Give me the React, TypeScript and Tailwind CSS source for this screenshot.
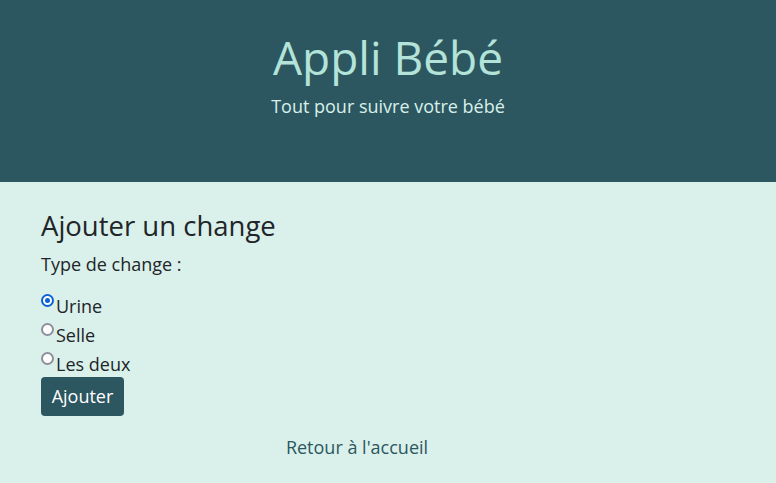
export default function App() {
  const font = { fontFamily: '"Open Sans", "Noto Sans", sans-serif' };
  return (
    <div className="w-[776px] h-[483px] bg-[#daf0ea] text-[#212529]" style={font}>
      <header className="h-[182px] bg-[#2c5760] flex flex-col items-center pt-[27px]">
        <h1 className="text-[46px] leading-[60px] text-[#b3e3d9] font-normal">Appli Bébé</h1>
        <p className="text-[18px] leading-[24px] text-[#d9f0ea] mt-[7px]">Tout pour suivre votre bébé</p>
      </header>
      <main className="pl-[41px] pt-[26px]">
        <h2 className="text-[27.5px] leading-[36px]">Ajouter un change</h2>
        <p className="text-[18px] leading-[24px] mt-[8px]">Type de change :</p>
        <div className="mt-[19px] flex flex-col">
          {["Urine", "Selle", "Les deux"].map((l, i) => (
            <label key={l} className="flex items-start h-[29px] text-[18px] leading-[29px]">
              {i === 0 ? (
                <span className="mt-[-1px] w-[13px] h-[13px] rounded-full border-[2px] border-[#0b62d8] bg-white flex items-center justify-center shrink-0">
                  <span className="w-[5px] h-[5px] rounded-full bg-[#0b62d8]" />
                </span>
              ) : (
                <span className="mt-[-1px] w-[13px] h-[13px] rounded-full border-[2px] border-[#8f8f9d] bg-white shrink-0" />
              )}
              <span className="mt-[-3px] ml-[2px]">{l}</span>
            </label>
          ))}
        </div>
        <button className="mt-[-5px] bg-[#2c5760] text-white text-[18px] rounded-[4px] w-[83px] h-[39px] flex items-center justify-center">Ajouter</button>
        <div className="w-[632px] text-center mt-[18px]">
          <a className="text-[18px] text-[#2c5760]">Retour à l'accueil</a>
        </div>
      </main>
    </div>
  );
}
